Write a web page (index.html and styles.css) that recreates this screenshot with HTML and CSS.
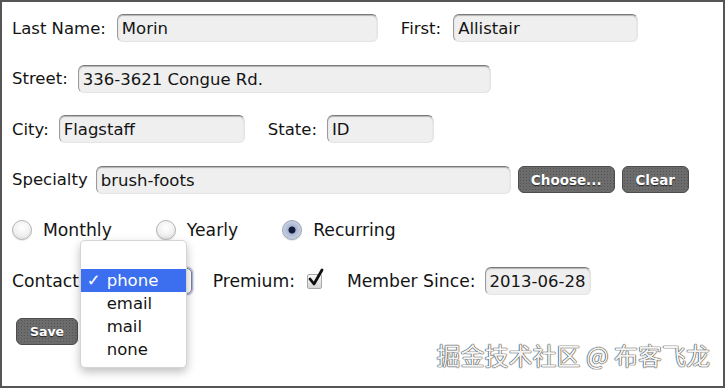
FILE: index.html
```html
<!DOCTYPE html>
<html lang="en">
<head>
  <meta charset="UTF-8">
  <title>Member Form</title>
  <link rel="stylesheet" href="styles.css">
</head>
<body>
  <div class="frame">
    <div class="row">
      <label class="label">Last Name:</label>
      <div class="field w-last">Morin</div>
      <label class="label group">First:</label>
      <div class="field w-first">Allistair</div>
    </div>

    <div class="row">
      <label class="label">Street:</label>
      <div class="field w-street">336-3621 Congue Rd.</div>
    </div>

    <div class="row">
      <label class="label">City:</label>
      <div class="field w-city">Flagstaff</div>
      <label class="label group">State:</label>
      <div class="field w-state">ID</div>
    </div>

    <div class="row">
      <label class="label">Specialty</label>
      <div class="field w-specialty">brush-foots</div>
      <button class="btn btn-choose">Choose...</button>
      <button class="btn btn-clear">Clear</button>
    </div>

    <div class="row">
      <span class="radio"></span><span class="radio-label">Monthly</span>
      <span class="radio"></span><span class="radio-label">Yearly</span>
      <span class="radio checked"></span><span class="radio-label">Recurring</span>
    </div>

    <div class="row">
      <label class="label contact">Contact:</label>
      <div class="select-wrap">
        <div class="select"></div>
        <!-- open popup menu of the select -->
        <ul class="menu">
          <li class="selected"><span class="tick">✓</span>phone</li>
          <li>email</li>
          <li>mail</li>
          <li>none</li>
        </ul>
      </div>
      <label class="label premium">Premium:</label>
      <span class="checkbox">
        <svg width="18" height="20" viewBox="0 0 18 20"><path d="M3 11 L7 16 L15 2" fill="none" stroke="#111" stroke-width="2.8" stroke-linecap="round" stroke-linejoin="round"/></svg>
      </span>
      <label class="label member">Member Since:</label>
      <div class="field w-date">2013-06-28</div>
    </div>

    <div class="row">
      <button class="btn btn-save">Save</button>
    </div>

    <div class="watermark">掘金技术社区 @ 布客飞龙</div>
  </div>
</body>
</html>
```

FILE: styles.css
```css
body {
  margin: 0;
  padding: 0;
  background-color: #fff;
  font-family: 'DejaVu Sans', Verdana, sans-serif;
  font-size: 16.5px;
  color: #141414;
}

.frame {
  position: relative;
  box-sizing: border-box;
  width: 725px;
  height: 388px;
  border: 2px solid #555;
  padding: 12px 10px 0 10px;
  display: flex;
  flex-direction: column;
  gap: 22.6px;
}

.row {
  display: flex;
  align-items: center;
  height: 28px;
}

.label {
  margin-right: 10px;
  white-space: nowrap;
}

.label.group {
  margin-left: 23px;
}

.field {
  box-sizing: border-box;
  height: 28px;
  padding: 4px 4px 0;
  background-color: #efefef;
  border: 1px solid #e4e4e4;
  border-top-color: #7a7a7a;
  border-left-color: #9a9a9a;
  border-radius: 6px;
  box-shadow: inset 0 1px 1px rgba(0, 0, 0, 0.25);
  white-space: nowrap;
}

.w-last { width: 261px; margin-left: 1px; }
.w-first { width: 185px; margin-left: 2px; }
.w-street { width: 413px; }
.w-city { width: 186px; }
.w-state { width: 107px; }
.w-specialty { width: 415px; margin-left: -2px; }
.w-date { width: 106px; }

.btn {
  box-sizing: border-box;
  height: 27px;
  margin-left: 7px;
  font-family: 'DejaVu Sans', Verdana, sans-serif;
  font-weight: bold;
  font-size: 13.5px;
  color: #fff;
  text-shadow: 0 1px 1px #222;
  background-color: #6c6c6c;
  background-image: radial-gradient(#555 0.7px, transparent 0.8px);
  background-size: 3px 3px;
  border: 1px solid #4c4c4c;
  border-radius: 6px;
  padding: 0;
}

.btn-choose { width: 97px; }
.btn-clear { width: 67px; }

.btn-save {
  width: 62px;
  margin-left: 4px;
  font-size: 12.5px;
}

/* radio buttons */
.radio {
  box-sizing: border-box;
  width: 20px;
  height: 20px;
  border-radius: 50%;
  border: 1px solid #b4b4b4;
  background: radial-gradient(circle at 50% 35%, #fff 0%, #f2f2f2 50%, #d8d8d8 100%);
  box-shadow: 0 1px 1px rgba(0, 0, 0, 0.1);
}

.radio.checked {
  border-color: #9aa4b8;
  background: radial-gradient(circle, #111a3a 0, #111a3a 3px, #a9b6d2 4px, #dfe4ee 100%);
}

.radio-label {
  margin-left: 11px;
  margin-right: 44px;
  font-size: 17.2px;
}

/* select with open menu */
.contact {
  font-size: 17.2px;
}

.select-wrap {
  position: relative;
  margin-left: -13px;
}

.select {
  box-sizing: border-box;
  width: 110px;
  height: 26px;
  border: 1px solid #7c7f96;
  border-radius: 5px;
  box-shadow: 0 0 2px 1px #8d99c8;
}

.menu {
  position: absolute;
  left: -2px;
  top: -28px;
  width: 105px;
  margin: 0;
  padding: 28px 0 6px;
  list-style: none;
  background-color: #fff;
  border: 1px solid #d4d4d4;
  border-radius: 5px;
  box-shadow: 0 4px 10px rgba(0, 0, 0, 0.25);
}

.menu li {
  height: 23px;
  line-height: 23px;
  padding-left: 26px;
  position: relative;
}

.menu li.selected {
  background-color: #3c6ff0;
  color: #fff;
}

.tick {
  position: absolute;
  left: 6px;
}

.premium {
  margin-left: 21px;
  margin-right: 12px;
  font-size: 17.2px;
}

.checkbox {
  position: relative;
  box-sizing: border-box;
  width: 15px;
  height: 15px;
  margin-top: 2px;
  border: 1px solid #a8a8a8;
  border-radius: 2px;
  background: linear-gradient(#fafafa, #d6d6d6);
}

.checkbox svg {
  position: absolute;
  left: -1px;
  top: -7px;
}

.member {
  margin-left: 25px;
  margin-right: 9px;
  font-size: 17.2px;
}

.watermark {
  position: absolute;
  right: 13px;
  bottom: 14px;
  font-family: 'Noto Sans CJK SC', sans-serif;
  font-size: 24px;
  color: #f4f4f4;
  text-shadow: 0 0 1px #333, 0 0 1px #333, 0 0 1px #555;
}
```
